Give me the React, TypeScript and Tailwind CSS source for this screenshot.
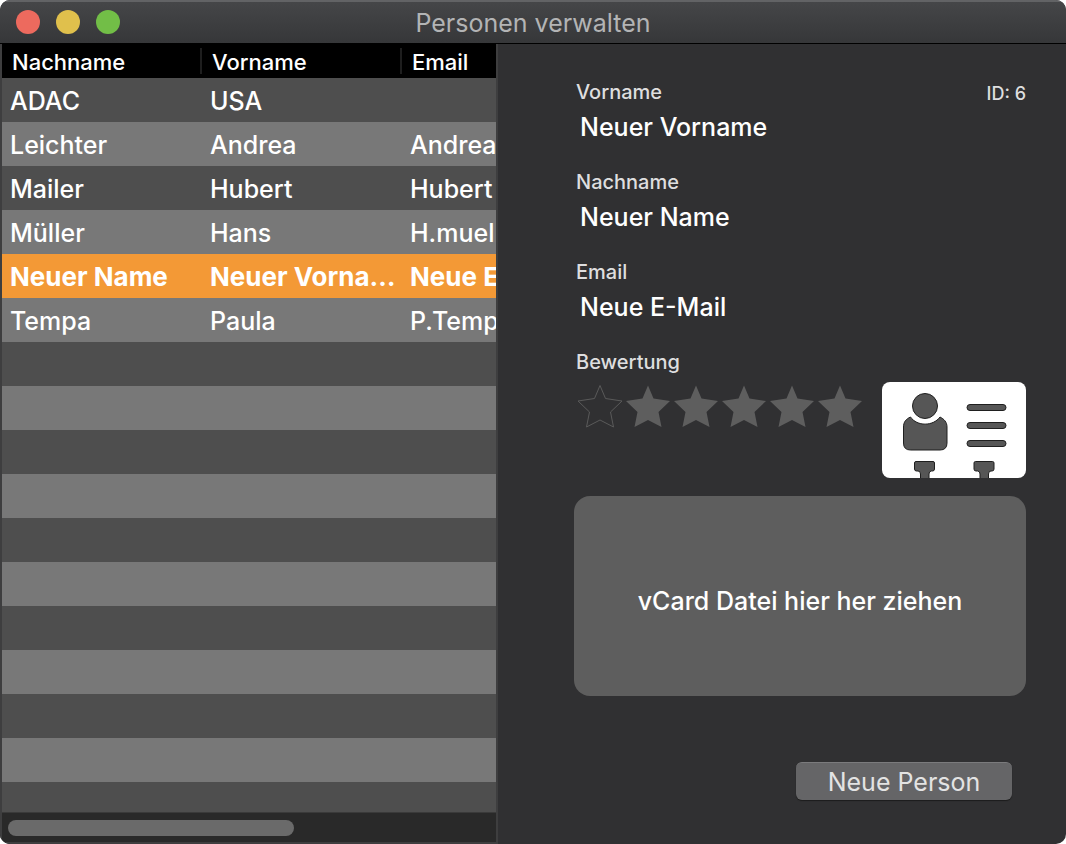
import { useState } from "react";

type Person = {
  id: number;
  lastName: string;
  firstName: string;
  email: string;
};

const PERSONS: Person[] = [
  { id: 1, lastName: "ADAC", firstName: "USA", email: "" },
  { id: 2, lastName: "Leichter", firstName: "Andrea", email: "Andrea" },
  { id: 3, lastName: "Mailer", firstName: "Hubert", email: "Hubert" },
  { id: 4, lastName: "Müller", firstName: "Hans", email: "H.muel" },
  { id: 6, lastName: "Neuer Name", firstName: "Neuer Vorname", email: "Neue E-Mail" },
  { id: 5, lastName: "Tempa", firstName: "Paula", email: "P.Temp" },
];

const COLUMNS = ["Nachname", "Vorname", "Email"];

const RATINGS = [0, 1, 2, 3, 4, 5];

const App = () => {
  const [persons, setPersons] = useState<Person[]>(PERSONS);
  const [selectedId, setSelectedId] = useState(6);
  const [rating, setRating] = useState(0);

  const selected = persons.find((person) => person.id === selectedId) ?? persons[0];

  const update = (changes: Partial<Person>) => {
    setPersons(persons.map((person) => (person.id === selectedId ? { ...person, ...changes } : person)));
  };

  const addPerson = () => {
    const id = Math.max(...persons.map((person) => person.id)) + 1;
    setPersons([...persons, { id, lastName: "Neuer Name", firstName: "Neuer Vorname", email: "Neue E-Mail" }]);
    setSelectedId(id);
  };

  return (
    <div className="flex h-screen flex-col overflow-hidden rounded-[10px] bg-[#303032] font-['Inter',sans-serif] text-white">
      <header className="grid h-11 shrink-0 grid-cols-[1fr_auto_1fr] items-center border-t-2 border-b border-t-[#626365] border-b-black bg-linear-to-b from-[#454648] to-[#363739] px-4 pb-0.5">
        <div className="flex gap-4">
          <button aria-label="Schließen" className="size-6 rounded-full bg-[#ed6a5e]" />
          <button aria-label="Minimieren" className="size-6 rounded-full bg-[#e0c04c]" />
          <button aria-label="Vergrößern" className="size-6 rounded-full bg-[#72be47]" />
        </div>
        <h1 className="pt-0.5 text-[25px] leading-8 text-[#b3b4b5]">Personen verwalten</h1>
      </header>

      <div className="flex min-h-0 flex-1">
        <section className="flex w-[498px] shrink-0 flex-col border-x-2 border-b-2 border-[#3e3e3f] bg-[#292929]">
          <div className="min-h-0 flex-1 overflow-hidden border-b border-[#3a3a3a] bg-[repeating-linear-gradient(#4e4e4e_0_44px,#787878_44px_88px)] bg-[position:0_34px]">
            <table className="w-[600px] table-fixed border-collapse text-left">
              <thead className="bg-black">
                <tr className="h-[34px]">
                  {COLUMNS.map((column) => (
                    <th key={column} className="p-0 text-[22px] leading-6 font-medium">
                      <div className="border-r-2 border-[#1e1e1e] pt-0.5 pl-[10px]">{column}</div>
                    </th>
                  ))}
                </tr>
              </thead>
              <tbody>
                {persons.map((person) => (
                  <tr
                    key={person.id}
                    onClick={() => setSelectedId(person.id)}
                    className={`h-11 leading-8 ${
                      person.id === selectedId ? "bg-[#f39936] text-[26px] font-bold" : "text-[25px] font-medium"
                    }`}
                  >
                    <td className="truncate pt-0.5 pr-0.5 pb-0 pl-2">{person.lastName}</td>
                    <td className="truncate pt-0.5 pr-0.5 pb-0 pl-2">{person.firstName}</td>
                    <td className="truncate pt-0.5 pr-0.5 pb-0 pl-2">{person.email}</td>
                  </tr>
                ))}
              </tbody>
            </table>
          </div>
          <div className="shrink-0 px-1.5 pt-[7px] pb-1.5">
            <div className="h-4 w-[286px] rounded-full bg-[#6a6a6a]" />
          </div>
        </section>

        <section className="flex min-w-0 flex-1 flex-col pt-9 pr-10 pl-[76px]">
          <div className="flex justify-between">
            <Field id="vorname" label="Vorname" value={selected.firstName} onChange={(firstName) => update({ firstName })} />
            <p className="mt-0.5 shrink-0 text-lg leading-6 font-medium text-[#dededf]">ID: {selected.id}</p>
          </div>
          <Field id="nachname" label="Nachname" value={selected.lastName} onChange={(lastName) => update({ lastName })} />
          <Field id="email" label="Email" value={selected.email} onChange={(email) => update({ email })} />

          <div className="flex justify-between">
            <fieldset>
              <legend className="pl-0.5 text-xl leading-6 font-medium text-[#dededf]">Bewertung</legend>
              <div className="flex pt-2 pl-0.5">
                {RATINGS.map((value) => (
                  <label key={value} className="relative">
                    <input
                      type="radio"
                      name="bewertung"
                      aria-label={`${value} Sterne`}
                      checked={rating === value}
                      onChange={() => setRating(value)}
                      className="absolute inset-0 m-0 size-full opacity-0"
                    />
                    <Star outline={value === 0} />
                  </label>
                ))}
              </div>
            </fieldset>
            <ContactCard />
          </div>

          <div className="mt-[18px] flex h-[200px] shrink-0 items-center justify-center rounded-2xl bg-[#5e5e5e] pt-2.5 text-[25px] leading-8 font-medium">
            vCard Datei hier her ziehen
          </div>

          <button
            onClick={addPerson}
            className="mt-[66px] mr-3.5 h-[38px] w-[216px] shrink-0 self-end rounded-md border-t border-[#7b7b7d] bg-[#656567] text-[25px] leading-8 text-[#e3e3e3] shadow-[0_1px_1px_#1c1c1c]"
          >
            Neue Person
          </button>
        </section>
      </div>
    </div>
  );
};

function Field({
  id,
  label,
  value,
  onChange,
}: {
  id: string;
  label: string;
  value: string;
  onChange: (value: string) => void;
}) {
  return (
    <div className="h-[90px] min-w-0 shrink-0">
      <label htmlFor={id} className="block pl-0.5 text-xl leading-6 font-medium text-[#dededf]">
        {label}
      </label>
      <input
        id={id}
        value={value}
        onChange={(event) => onChange(event.target.value)}
        className="mt-1 block h-[38px] w-full bg-transparent pl-1.5 text-[25px] leading-8 font-medium outline-none"
      />
    </div>
  );
}

function Star({ outline }: { outline: boolean }) {
  return (
    <svg viewBox="0 0 48 46" className="block h-[46px] w-12" aria-hidden="true">
      <path
        d="M24 3.5 L29.500 16.500 L46 19 L34.500 30 L37.500 45 L24 38 L10.500 45 L13.500 30 L2 19 L18.500 16.500 Z"
        fill={outline ? "none" : "#5e5e5e"}
        stroke="#5a5a5a"
        strokeWidth={outline ? 1 : 0}
      />
    </svg>
  );
}

function ContactCard() {
  return (
    <svg
      viewBox="0 0 144 96"
      className="mt-8 block h-24 w-36 shrink-0 rounded-lg bg-white"
      fill="#565656"
      stroke="#1f1f1f"
      strokeWidth="1"
      aria-hidden="true"
    >
      <circle cx="43" cy="24" r="12.5" />
      <path d="M28.5 35 C35 44.5 51 44.5 58 35 C62 37 65 40 65 45 V61 Q65 68 58 68 H28.5 Q21.5 68 21.5 61 V45 C21.5 40 24 37 28.5 35 Z" />
      <rect x="85" y="22.5" width="39" height="6" rx="3" />
      <rect x="85" y="40.5" width="39" height="6" rx="3" />
      <rect x="85" y="58.5" width="39" height="6" rx="3" />
      <path d="M34 79.5 H51 Q52.5 79.5 52.5 81 V87 Q52.5 89 50.5 89 H49.5 Q47 89 47 92 V97 H38.5 V92 Q38.5 89 36 89 H34.5 Q32.5 89 32.5 87 V81 Q32.5 79.5 34 79.5 Z" />
      <path d="M93.5 79.5 H110.5 Q112 79.5 112 81 V87 Q112 89 110 89 H109 Q106.5 89 106.5 92 V97 H98 V92 Q98 89 95.5 89 H94 Q92 89 92 87 V81 Q92 79.5 93.5 79.5 Z" />
    </svg>
  );
}

export default App;
